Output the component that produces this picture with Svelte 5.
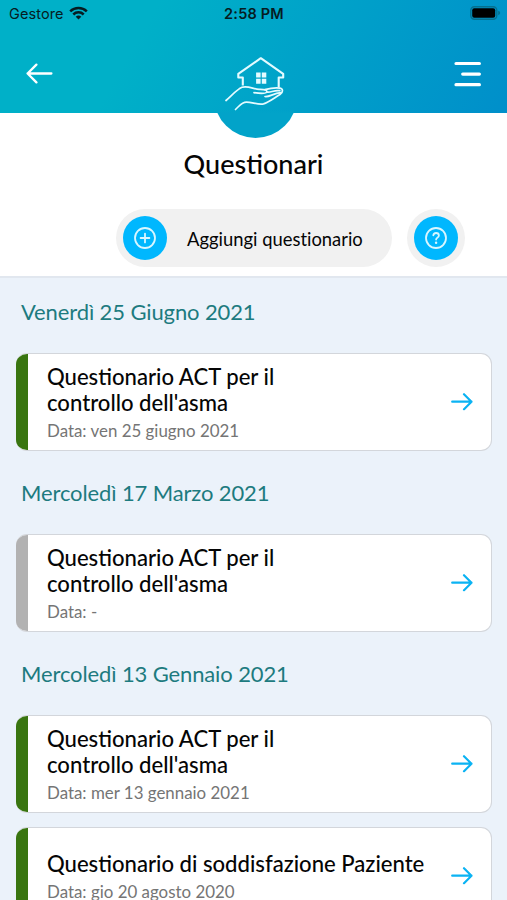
<script>
  const groups = [
    {
      day: 'Venerdì 25 Giugno 2021',
      items: [
        {
          title: "Questionario ACT per il\ncontrollo dell'asma",
          date: 'ven 25 giugno 2021',
          done: true
        }
      ]
    },
    {
      day: 'Mercoledì 17 Marzo 2021',
      items: [
        {
          title: "Questionario ACT per il\ncontrollo dell'asma",
          date: '-',
          done: false
        }
      ]
    },
    {
      day: 'Mercoledì 13 Gennaio 2021',
      items: [
        {
          title: "Questionario ACT per il\ncontrollo dell'asma",
          date: 'mer 13 gennaio 2021',
          done: true
        },
        {
          title: 'Questionario di soddisfazione Paziente',
          date: 'gio 20 agosto 2020',
          done: true
        }
      ]
    }
  ];
</script>

<div class="screen">
  <header>
    <div class="status">
      <div class="carrier">
        <span>Gestore</span>
        <svg width="19" height="14" viewBox="0 0 19 14" fill="none" stroke="#061c22" stroke-width="2.5">
          <path d="M1.2 5.3a11.8 11.8 0 0 1 16.6 0" />
          <path d="M4.3 8.5a7.4 7.4 0 0 1 10.4 0" />
          <path d="M9.5 13.6 6.7 10.8a4 4 0 0 1 5.6 0z" fill="#061c22" stroke="none" />
        </svg>
      </div>
      <div class="clock">2:58 PM</div>
      <svg class="battery" width="31" height="14" viewBox="0 0 31 14">
        <rect x="0.8" y="0.8" width="26" height="12.4" rx="3.6" fill="none" stroke="#05708f" stroke-width="1.4" />
        <rect x="2.2" y="2.2" width="23" height="9.6" rx="2" fill="#000" />
        <path d="M28.2 4.8q2 .6 2 2.2t-2 2.2z" fill="#05708f" />
      </svg>
    </div>
    <div class="nav">
      <svg width="28" height="22" viewBox="0 0 28 22" fill="none" stroke="#fff" stroke-width="2.3" stroke-linecap="round" stroke-linejoin="round">
        <path d="M25.4 10.5H1.6M10.4 1.6l-8.8 8.9 8.8 8.9" />
      </svg>
      <svg width="28" height="26" viewBox="0 0 28 26" fill="none" stroke="#fff" stroke-width="3.2" stroke-linecap="round">
        <path d="M2 2.5h23.4M8.7 13.1h16.7M2 23.7h23.4" />
      </svg>
    </div>
    <div class="logo">
      <svg width="84" height="84" viewBox="0 0 84 84" fill="none" stroke="#e4fbff" stroke-linecap="round" stroke-linejoin="round">
        <path d="M28.8 30.5v-8h-4.5v-3.6L46.8 3.2l22.4 15.7v3.6h-4.5v10" stroke-width="2.1" stroke-linecap="butt" />
        <path d="M42.1 17.5h4.5v5h-4.5zM47.8 17.5h4.5v5h-4.5zM42.1 23.7h4.5v5h-4.5zM47.8 23.7h4.5v5h-4.5z" fill="#e4fbff" stroke="none" />
        <path d="M12 45.5c7-6.3 11.3-11.3 16-13.2 5.5-2.1 11.5 1.8 17 2.1 5 .3 8.3.3 7.8 2.5-.6 2.4-7.6 1.5-12.8.8" stroke-width="1.7" />
        <path d="M21.5 54.5c4.8-4.5 6.3-7.4 11-7.4 5.5 0 12.3 3.1 17 1.8 5.5-1.7 11.3-6.4 16.5-9.4 3.3-2 3.3-5.8 0-6.4-5-.7-10.6.3-15.2 1.5M53 37c3.6 1 7-2.3 12.8-1.3M51 41.5c4.3.7 8.2-3.2 15.8-3.8" stroke-width="1.7" />
      </svg>
    </div>
  </header>

  <section class="top">
    <h1>Questionari</h1>
    <div class="actions">
      <button class="add">
        <span class="dot">
          <svg width="22" height="22" viewBox="0 0 22 22" fill="none" stroke="#d9f6ff" stroke-width="1.8" stroke-linecap="round">
            <circle cx="11" cy="11" r="10" />
            <path d="M11 6.6v8.8M6.6 11h8.8" />
          </svg>
        </span>
        <span class="add-label">Aggiungi questionario</span>
      </button>
      <button class="help" aria-label="Aiuto">
        <span class="dot">
          <svg width="22" height="22" viewBox="0 0 22 22" fill="none" stroke="#d9f6ff" stroke-width="1.8" stroke-linecap="round" stroke-linejoin="round">
            <circle cx="11" cy="11" r="10" />
            <path d="M8.3 8.3c.3-1.5 1.4-2.3 2.8-2.3 1.6 0 2.8 1 2.8 2.5 0 2-2.8 2.2-2.8 4.1" />
            <circle cx="11.1" cy="15.7" r="1.2" fill="#d9f6ff" stroke="none" />
          </svg>
        </span>
      </button>
    </div>
  </section>

  <main>
    {#each groups as group}
      <h2>{group.day}</h2>
      {#each group.items as item}
        <div class="card" class:done={item.done}>
          <div class="stripe"></div>
          <div class="text">
            <h3>{item.title}</h3>
            <p>Data: {item.date}</p>
          </div>
          <svg class="arrow" width="22" height="18" viewBox="0 0 22 18" fill="none" stroke="#0bb3f3" stroke-width="2.2" stroke-linecap="round" stroke-linejoin="round">
            <path d="M1.2 8.7h19.3M13 1.2l7.5 7.5-7.5 7.5" />
          </svg>
        </div>
      {/each}
    {/each}
  </main>
</div>

<style>
  :global(body) {
    margin: 0;
    overflow: hidden;
  }

  .screen {
    height: 900px;
    overflow: hidden;
    display: flex;
    flex-direction: column;
    background: #fff;
    font-family: Lato, 'Open Sans', sans-serif;
    color: #050505;
  }

  h1,
  h2,
  h3,
  p {
    margin: 0;
  }

  header {
    position: relative;
    height: 113px;
    flex: none;
    background: linear-gradient(120deg, #00b0c8 28%, #008fca 100%);
  }

  .status {
    height: 27px;
    display: grid;
    grid-template-columns: 1fr auto 1fr;
    align-items: center;
    padding: 0 6px 0 9px;
    font-family: Inter, sans-serif;
    font-size: 14.5px;
    color: #061c22;
  }

  .carrier {
    display: flex;
    align-items: center;
    gap: 5px;
    letter-spacing: 0.1px;
  }

  .carrier svg {
    margin-top: -2px;
  }

  .clock {
    margin-right: 2px;
    font-weight: 600;
    letter-spacing: 0.2px;
  }

  .battery {
    justify-self: end;
    margin-top: -1px;
  }

  .nav {
    display: flex;
    justify-content: space-between;
    align-items: center;
    height: 93px;
    padding: 0 25px 0 26px;
  }

  .logo {
    position: absolute;
    left: 214px;
    top: 55px;
    width: 83px;
    height: 83px;
    border-radius: 50%;
    background: linear-gradient(#02a3c900 55px, #02a3c9 58px);
  }

  .logo svg {
    display: block;
  }

  .top {
    height: 163px;
    flex: none;
    border-bottom: 2px solid #e1e7ef;
  }

  h1 {
    padding-top: 35px;
    font-size: 27px;
    line-height: 32px;
    font-weight: 500;
    text-align: center;
  }

  .actions {
    display: flex;
    justify-content: flex-end;
    gap: 15px;
    margin: 29px 42px 0 0;
  }

  button {
    display: flex;
    align-items: center;
    box-sizing: border-box;
    height: 58px;
    padding: 7px;
    border: 0;
    border-radius: 30px;
    background: #f1f1f1;
    font: inherit;
    color: inherit;
  }

  .add {
    width: 276px;
  }

  .dot {
    display: flex;
    align-items: center;
    justify-content: center;
    width: 44px;
    height: 44px;
    border-radius: 50%;
    background: #00b7fe;
  }

  .add-label {
    margin-left: 20px;
    padding-top: 1px;
    font-size: 18.4px;
    font-variant-ligatures: none;
    white-space: nowrap;
  }

  main {
    flex: 1;
    padding: 0 15px 0 16px;
    background: #ebf2fa;
  }

  h2 {
    padding: 19px 5px 27px;
    font-size: 22px;
    line-height: 29px;
    font-weight: 400;
    letter-spacing: -0.12px;
    color: #1d7b7f;
  }

  .card {
    display: flex;
    align-items: center;
    box-sizing: border-box;
    height: 98px;
    overflow: hidden;
    border: 1.5px solid #d3d6db;
    border-left: 0;
    border-radius: 11px;
    background: #fff;
  }

  .card + .card {
    margin-top: 14px;
  }

  .card + h2 {
    padding-top: 27px;
  }

  .stripe {
    align-self: stretch;
    width: 12px;
    margin: -2px 0;
    background: #b2b2b2;
  }

  .done .stripe {
    background: #397510;
  }

  .text {
    width: 385px;
    margin-left: 19px;
    padding-top: 1px;
  }

  h3 {
    font-size: 22.1px;
    line-height: 26px;
    font-weight: 500;
    white-space: pre-line;
  }

  .text p {
    padding-top: 4px;
    font-size: 16.9px;
    line-height: 21px;
    color: #757575;
  }

  .arrow {
    margin-left: auto;
    margin-right: 18px;
  }
</style>
